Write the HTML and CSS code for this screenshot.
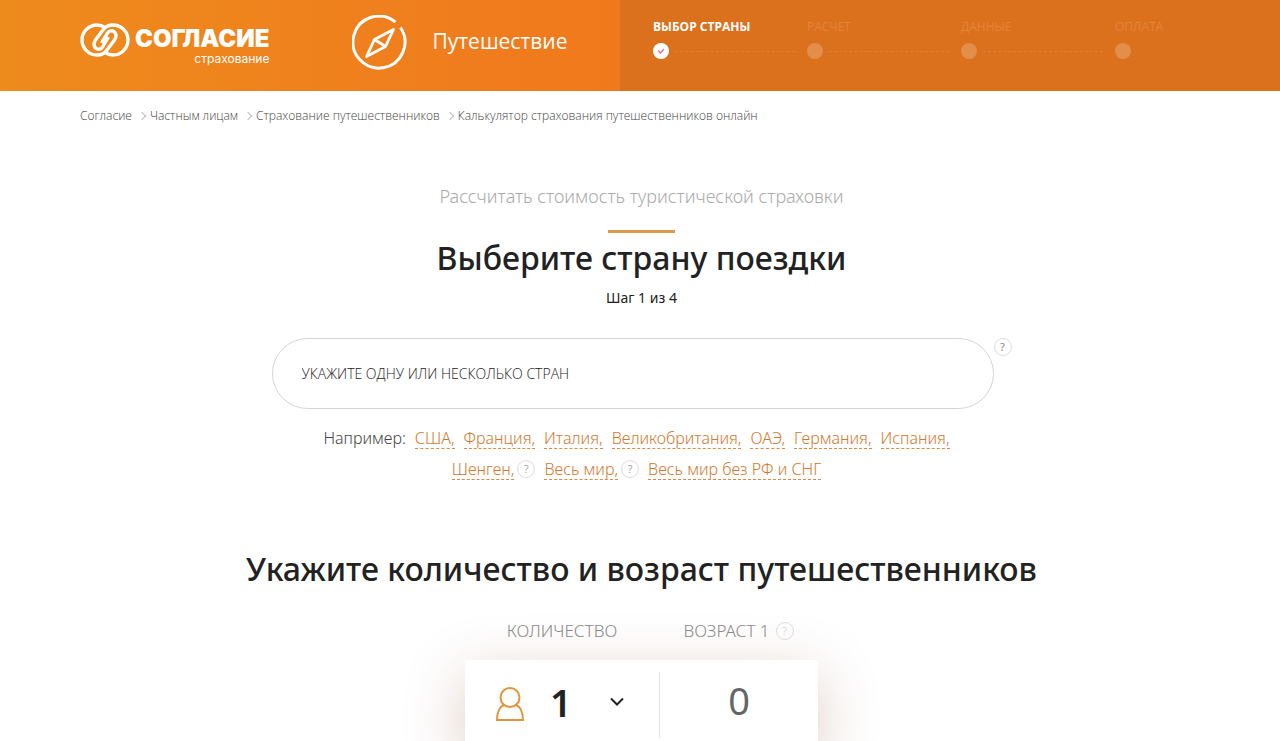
FILE: index.html
```
<!DOCTYPE html>
<html lang="ru">
	<head>
		<meta charset="utf-8">
		<meta name="viewport" content="width=device-width, initial-scale=1">
		<title>Калькулятор страхования путешественников онлайн</title>

		<link rel="stylesheet" href="styles.css">
	</head>

	<body>
		<header class="header">
			<div class="header__brand">
				<a href="#" class="logo">
					<svg class="logo__sign" width="50" height="34" viewBox="0 0 50 34" fill="none" stroke="currentColor" stroke-width="3.400">
						<path d="M25 4.500C22 2.500 20 2 17 2A15 15 0 0 0 17 32C22 32 25 30 27 27L34.500 17C39 9 31 5 27.500 10L21.500 20"/>
						<path d="M25 29.500C28 31.500 30 32 33 32A15 15 0 0 0 33 2C28 2 25 4 23 7L15.500 17C11 25 19 29 22.500 24L28.500 14"/>
					</svg>
					<span class="logo__text">
						<span class="logo__name">СОГЛАСИЕ</span>
						<span class="logo__sub">страхование</span>
					</span>
				</a>
				<div class="product">
					<svg width="56" height="56" viewBox="0 0 56 56" fill="none" stroke="currentColor" stroke-width="3">
						<path d="M43.500 7A26 26 0 1 0 48.500 12.500"/>
						<path d="M41.500 14.500L22.500 24.500L14.500 41.500L33.500 31.500ZM22.500 24.500L33.500 31.500" stroke-width="2.800" stroke-linejoin="round"/>
					</svg>
					<span class="product__name">Путешествие</span>
				</div>
			</div>
			<ol class="steps">
				<li class="step step--active">
					<span class="step__name">Выбор страны</span>
					<span class="step__line">
						<span class="step__dot">
							<svg width="8" height="6" viewBox="0 0 8 6" fill="none" stroke="currentColor" stroke-width="1.500"><path d="M1 2.500L3.500 5L7 1"/></svg>
						</span>
					</span>
				</li>
				<li class="step">
					<span class="step__name">Расчет</span>
					<span class="step__line"><span class="step__dot"></span></span>
				</li>
				<li class="step">
					<span class="step__name">Данные</span>
					<span class="step__line"><span class="step__dot"></span></span>
				</li>
				<li class="step">
					<span class="step__name">Оплата</span>
					<span class="step__line"><span class="step__dot"></span></span>
				</li>
			</ol>
		</header>

		<nav class="breadcrumbs">
			<a href="#">Согласие</a>
			<a href="#">Частным лицам</a>
			<a href="#">Страхование путешественников</a>
			<a href="#">Калькулятор страхования путешественников онлайн</a>
		</nav>

		<main class="main">
			<h1 class="subtitle">Рассчитать стоимость туристической страховки</h1>
			<h2 class="title title--line">Выберите страну поездки</h2>
			<p class="counter">Шаг 1 из 4</p>

			<div class="search">
				<input type="text" class="search__input" placeholder="УКАЖИТЕ ОДНУ ИЛИ НЕСКОЛЬКО СТРАН" aria-label="Укажите одну или несколько стран">
				<button type="button" class="hint">?</button>
			</div>

			<div class="examples">
				<span>Например:</span>
				<a href="#">США,</a>
				<a href="#">Франция,</a>
				<a href="#">Италия,</a>
				<a href="#">Великобритания,</a>
				<a href="#">ОАЭ,</a>
				<a href="#">Германия,</a>
				<a href="#">Испания,</a>
				<span class="examples__item"><a href="#">Шенген,</a><button type="button" class="hint">?</button></span>
				<span class="examples__item"><a href="#">Весь мир,</a><button type="button" class="hint">?</button></span>
				<a href="#">Весь мир без РФ и СНГ</a>
			</div>

			<h2 class="title">Укажите количество и возраст путешественников</h2>

			<form class="people">
				<div class="people__labels">
					<label class="people__label people__label--count" for="count">Количество</label>
					<div class="people__label people__label--age">
						<label for="age">Возраст 1</label>
						<button type="button" class="hint hint--light">?</button>
					</div>
				</div>
				<div class="people__card">
					<div class="people__count">
						<svg class="people__icon" width="28" height="36" viewBox="0 0 28 36" fill="none" stroke="currentColor" stroke-width="2">
							<circle cx="14" cy="10.500" r="9.500"/>
							<path d="M8.500 17.500C3 20 1 25 1 33H27C27 25 25 20 19.500 17.500"/>
						</svg>
						<select class="people__select" id="count">
							<option>1</option>
							<option>2</option>
							<option>3</option>
							<option>4</option>
							<option>5</option>
						</select>
						<svg class="people__arrow" width="16" height="10" viewBox="0 0 16 10" fill="none" stroke="currentColor" stroke-width="2"><path d="M2 1.500L8 7.500L14 1.500"/></svg>
					</div>
					<div class="people__age">
						<input type="text" class="people__input" id="age" value="0">
					</div>
				</div>
			</form>
		</main>
	</body>
</html>
```
FILE: styles.css
```
* {
	padding: 0;
	margin: 0;
	box-sizing: border-box;
}

body {
	height: 100vh;
	overflow: hidden;
	font-family: 'Noto Sans', 'Open Sans', sans-serif;
	color: #222;
	background: #fff;
}

a {
	color: inherit;
	text-decoration: none;
}

button, input, select {
	font: inherit;
	color: inherit;
	border: 0;
	background: none;
}

/* Header */
.header {
	display: flex;
	height: 91px;
	color: #fff;
	background: #db711d;
}

.header__brand {
	display: flex;
	align-items: center;
	gap: 83px;
	flex: 0 0 620px;
	padding: 0 0 6px 80px;
	background: linear-gradient(90deg, #ee8b1d, #f07c1d 80%, #f0791c);
}

.logo {
	display: flex;
	align-items: center;
	gap: 5px;
}

.logo__sign {
	margin-bottom: 6px;
}

.logo__text {
	display: flex;
	flex-direction: column;
	gap: 2px;
	padding-top: 6px;
	font-family: Inter, 'Open Sans', sans-serif;
}

.logo__name {
	font-size: 24px;
	font-weight: 900;
	line-height: 24px;
}

.logo__sub {
	font-size: 12px;
	line-height: 12px;
	text-align: right;
}

.product {
	display: flex;
	align-items: center;
	gap: 24px;
}

.product__name {
	padding-bottom: 4px;
	font-family: 'Open Sans', 'Noto Sans', sans-serif;
	font-size: 21px;
	line-height: 28px;
}

.steps {
	display: flex;
	flex: 1;
	padding: 19px 0 0 33px;
	font-family: 'Open Sans', 'Noto Sans', sans-serif;
	list-style: none;
}

.step {
	flex: 0 1 154px;
	color: #e5843a;
}

.step__name {
	display: block;
	font-size: 12px;
	line-height: 16px;
	text-transform: uppercase;
}

.step__line {
	display: flex;
	align-items: center;
	gap: 6px;
	margin-top: 8px;
}

.step__dot {
	display: flex;
	align-items: center;
	justify-content: center;
	width: 16px;
	height: 16px;
	border-radius: 50%;
	background: #e38e4b;
}

.step:not(:last-child) .step__line:after {
	content: '';
	flex: 1;
	margin-right: 12px;
	border-top: 1px dashed #e27e33;
}

.step--active {
	color: #fff;
}

.step--active .step__name {
	font-weight: 700;
}

.step--active .step__dot {
	color: #d77a9a;
	background: #fff;
}

/* Breadcrumbs */
.breadcrumbs {
	display: flex;
	padding: 16px 80px 0;
	font-family: 'Open Sans', 'Noto Sans', sans-serif;
	font-size: 12px;
	font-weight: 300;
	line-height: 18px;
	color: #444;
}

.breadcrumbs a {
	display: flex;
	align-items: center;
}

/* Small arrow between the links */
.breadcrumbs a:not(:last-child):after {
	content: '';
	width: 5px;
	height: 5px;
	margin: 0 5px 0 7px;
	border: solid #bbb;
	border-width: 1px 1px 0 0;
	transform: rotate(45deg);
}

/* Main */
.main {
	display: flex;
	flex-direction: column;
	align-items: center;
	padding: 58px 17px 0 20px;
}

.subtitle {
	font-size: 18px;
	font-weight: 300;
	line-height: 26px;
	color: #aaa;
}

.title {
	font-size: 32px;
	font-weight: 500;
	line-height: 44px;
	text-align: center;
}

.title--line:before {
	content: '';
	display: block;
	width: 67px;
	height: 3px;
	margin: 21px auto 3px;
	background: #d9984a;
}

.counter {
	margin-top: 8px;
	font-size: 14px;
	line-height: 20px;
}

.search {
	display: flex;
	width: 740px;
	max-width: 100%;
	margin-top: 30px;
}

.search__input {
	flex: 1;
	height: 71px;
	padding: 0 29px;
	border: 1px solid #d4d4d4;
	border-radius: 36px;
	font-family: 'Open Sans', 'Noto Sans', sans-serif;
	font-size: 14px;
	font-weight: 300;
}

.search__input::placeholder {
	color: #222;
	opacity: 1;
}

.hint {
	flex: none;
	width: 18px;
	height: 18px;
	border: 1px solid #ddd;
	border-radius: 50%;
	font-size: 11px;
	line-height: 16px;
	text-align: center;
	color: #888;
}

.hint--light {
	color: #ccc;
}

.examples {
	display: flex;
	flex-wrap: wrap;
	justify-content: center;
	gap: 9px;
	width: 660px;
	max-width: 100%;
	margin: 18px 0 67px;
	padding-right: 10px;
	font-size: 16px;
	font-weight: 300;
	line-height: 22px;
	color: #444;
}

.examples a {
	height: 22px;
	line-height: 22px;
	color: #cf7a30;
	border-bottom: 1px dashed #d98b45;
}

.examples__item {
	display: flex;
	align-items: center;
	gap: 3px;
}

/* Travellers */
.people {
	width: 353px;
	max-width: 100%;
	margin-top: 28px;
}

.people__labels {
	display: flex;
	position: relative;
	z-index: 1;
	font-size: 17px;
	font-weight: 300;
	line-height: 24px;
	text-transform: uppercase;
	color: #888;
}

.people__label--count {
	flex: 0 0 194px;
	text-align: center;
}

.people__label--age {
	display: flex;
	flex: 1;
	align-items: center;
	justify-content: center;
	gap: 6px;
}

.people__card {
	display: flex;
	height: 90px;
	margin-top: 17px;
	padding: 12px 0;
	background: #fff;
	border-radius: 3px;
	box-shadow: 0 16px 60px rgba(130, 50, 20, 0.25);
}

.people__count {
	display: flex;
	align-items: center;
	flex: 0 0 195px;
	padding: 0 34px 0 31px;
	border-right: 1px solid #e5e5e5;
}

.people__icon {
	color: #e0953f;
}

.people__select {
	flex: 1;
	padding: 0 0 6px 26px;
	font-size: 38px;
	font-weight: 600;
	line-height: 52px;
	appearance: none;
}

.people__arrow {
	margin-bottom: 6px;
}

.people__age {
	flex: 1;
	padding-top: 2px;
}

.people__input {
	width: 100%;
	font-size: 38px;
	line-height: 52px;
	text-align: center;
	color: #666;
}
```
